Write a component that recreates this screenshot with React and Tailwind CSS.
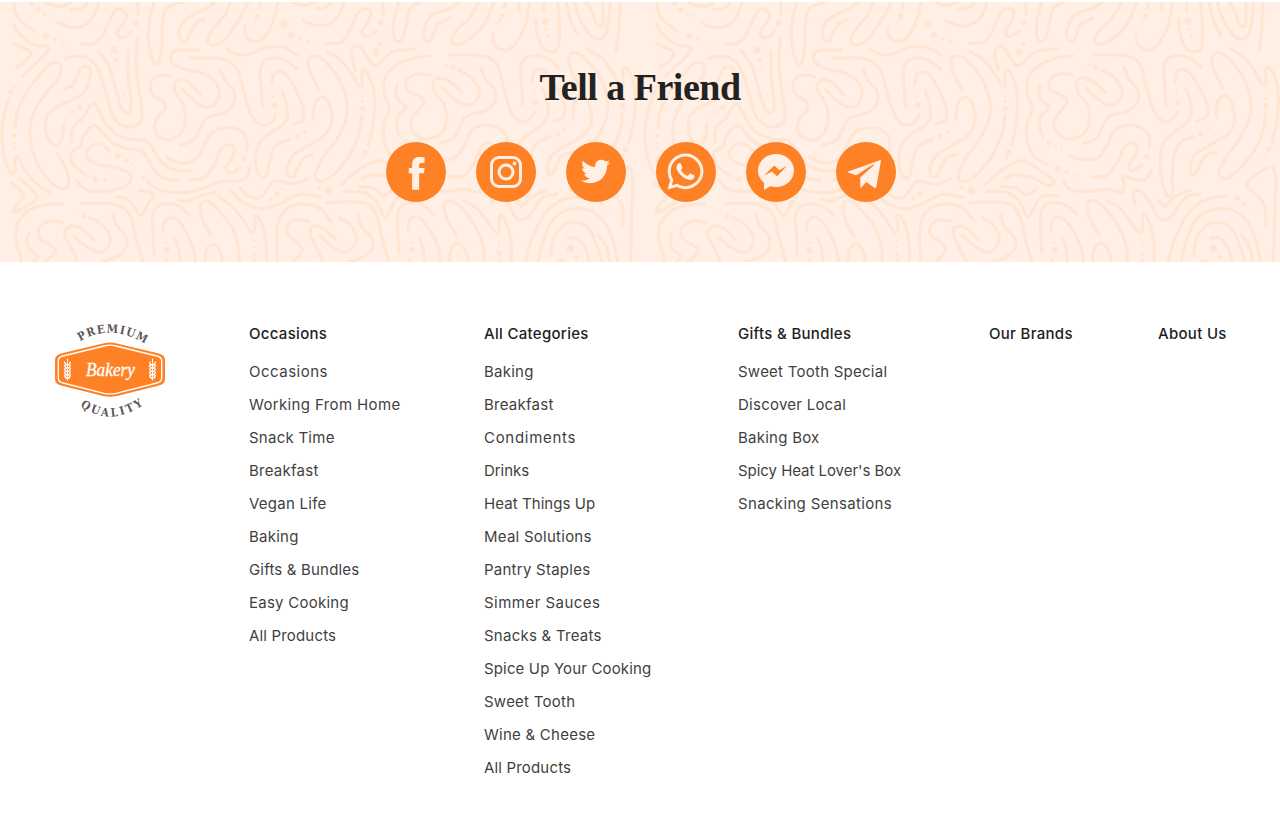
import React from "react";
import { FaTwitter, FaWhatsapp } from "react-icons/fa";

/* Hand-drawn doodle lines of the banner, as points on a 1929-wide repeating tile. */
const LINES_LEFT = `
42,6 45,35 65,65 104,94
40,72 60,105 100,133 140,140 143,152 115,185 67,227
42,130 88,153 92,165 75,185 50,200
135,6 160,16 190,18 210,8
213,29 235,27 255,18 262,6
174,67 200,79 235,82 265,68 285,40 297,6
246,131 280,131 305,110 325,70 345,33 365,28 380,45 370,70 352,95 360,112 380,108 395,94
413,6 415,44
413,112 408,180 415,260 426,330 422,365 395,380 360,372 335,340 315,270 290,200 260,173 225,168 196,175
295,153 325,195 345,260 362,320 378,338 392,330 392,290 384,230 384,153
193,267 215,258 232,225 245,202 262,200 272,212 265,250 250,280 215,300 165,325 140,350 137,390 150,425 168,437 182,425 190,400 190,372
216,427 215,400 225,375 250,355 262,330 275,312 285,312 298,335 320,375 350,403 395,418 430,420 455,440 475,475 500,500 535,512 575,512
262,528 225,500 212,475 215,455 238,440 250,410 270,383 290,378 308,400 340,430 380,445 425,453 445,480 465,515 495,535 533,541
327,452 305,432 285,433 262,450 262,475 290,492 345,503 385,517 394,535 380,555 340,570 290,575 250,565 231,541
45,383 52,335 80,275 115,230 145,195 170,187 184,200 178,230 150,265 115,310 95,355 90,405 98,455 120,505 150,545 180,565 203,558 205,530 195,500 174,462
27,295 12,345 6,405 12,465 27,510 40,522 45,505 45,475 55,472 75,510 105,548 150,577
60,537 85,558 111,590 90,612 55,632 40,635 50,615 70,590 60,570 33,550
185,611 130,616 85,632 55,665 47,700 50,735 62,765 62,786
187,669 155,662 125,675 114,695 122,720 150,735 167,750 155,768 135,786
86,702 80,722 90,750 113,768 100,786
246,610 320,610 365,620 390,645 405,700 420,760 430,786
338,645 350,675 375,705 380,735 360,765 305,786
270,653 300,670 328,705 325,740 300,757 275,748 250,733 224,710
280,720 250,690 220,678 197,690 197,715 215,745 232,786
418,572 455,578 460,590 445,610 428,643 415,640 395,610 375,595 352,591
442,546 480,570 540,578 600,568 665,545 715,543 740,530 750,503
535,598 565,603 595,590 643,578
570,645 535,618 500,611 470,622 457,650 460,700 462,760
490,690 493,668 508,652 530,658 558,695 580,750 587,786
522,711 535,745 540,786
633,706 610,665 600,625 607,606 630,606 665,640 700,690 715,745 718,786
616,786 618,755 632,735 650,738 663,760 666,786
656,591 695,618 730,660 750,692 762,695 765,670 762,650 772,648 790,685 798,735 800,786
547,6 500,25 487,70 485,140 478,185 467,192 455,175 445,110 450,50 463,6
645,6 620,25 580,45 550,65 537,100 545,122 560,122 572,95 590,68 614,58
690,6 675,45 640,85 623,120 635,135 670,122 710,70 745,6
735,80 737,105 755,123 785,118 815,75 835,6
780,6 777,24
680,147 710,162 750,162 800,142 850,142 893,165
594,150 540,150 515,158 515,185 550,207 600,217 640,240 658,275 645,312 620,322 590,308 547,270
600,283 570,250 545,238 525,250 525,275 545,305 556,345 548,390 520,417 490,417 465,395 468,360 495,325 490,305 460,285 450,260 460,235 490,225 514,230
570,174 650,174 690,187 715,215 730,270 750,335 775,370 800,374 820,360 827,343
661,208 675,240 700,270 703,305 680,335 620,355 605,375 580,420 540,436
500,472 545,490 590,475 615,430 640,395 690,383 725,395 740,420 740,449
570,538 610,535 640,500 665,445 690,435 705,450 695,475 678,500 685,518 700,518 718,503
893,208 860,182 825,174 795,182 781,210 783,260 789,323
815,252 820,225 838,215 860,225 890,275 910,325 908,360 879,371
847,272 858,310 862,355 840,380 795,410 772,445 768,500 785,533 800,525 810,480 825,440 870,417
938,465 910,475 893,505 880,530 863,525 862,500 880,465 920,440 970,410 993,375 995,335 980,298 962,293 945,310 938,358
957,269 930,215 925,180 940,167 970,180 1015,235 1040,300 1040,350 1015,410 975,465 950,510 948,538 970,543 1010,515 1055,455 1080,390 1086,347
982,155 1020,178 1050,215 1075,255 1087,258 1085,230 1090,210 1100,215 1120,265 1124,320 1118,380 1105,435
980,130 1020,128 1045,100 1070,45 1095,25 1113,38 1105,65 1087,95 1100,110 1130,93
909,63 960,78 1000,65 1020,40 1032,6
949,27 975,23 997,6
875,6 910,16 945,6
1148,6 1150,42
1066,210 1054,160 1069,138 1086,145 1106,180 1123,197 1146,183 1181,155 1243,147
720,564 750,590 780,592 805,565 825,543 880,552 922,536
692,572 730,608 785,627 840,610 900,583 960,592
1031,575 1091,577 1129,605 1146,640 1158,652 1173,625 1196,590 1246,587
981,608 1056,605 1106,615 1131,650 1143,700 1156,750 1168,786
833,786 830,700 840,650 870,620 910,612 960,625 993,664
924,663 885,660 862,680 865,705 900,735 905,755 880,786
1007,718 970,685 945,678 930,695 945,735 970,786
958,707 990,735 1030,757 1060,740 1068,710 1050,675 1018,653
1072,645 1085,680 1115,715 1115,750 1080,775 1045,786
1024,555 1076,510 1136,482 1181,505 1226,535 1231,553 1211,555 1161,530 1111,525 1086,537
1078,560 1121,565 1151,585 1181,567`;

const LINES_RIGHT = `
550,6 520,25 508,70 495,118 475,120 470,70 485,6
667,6 640,25 585,45 562,85 560,110 572,124 588,108 600,75 638,55
725,6 700,50 660,90 645,115 655,133 690,122 740,75 770,6
768,102 770,125 785,145 810,150 840,125 865,75 877,6
808,6 800,25
845,6 846,30
895,57 900,100 915,140 940,155 960,148 968,110 965,50 962,6
921,6 920,30
988,6 1000,60 1023,107
1012,6 1030,60 1060,105 1085,117 1105,105 1115,60 1120,6
1047,6 1065,35 1077,70 1088,80 1097,70 1098,6
1149,6 1145,90 1137,152
578,167 520,177 465,205 442,240 443,285 457,325 440,375 443,430 465,470 500,493
481,255 476,285 490,305 507,322 482,350 480,385 490,411
578,224 540,222 510,240 512,270 550,290 562,305 545,330 525,355 525,390 550,413 580,415 612,400 628,365 622,315 598,285 588,255 600,235 625,238 650,253 674,277
618,265 650,295 690,315 720,300 725,265 700,230 667,210
732,202 745,235 773,270 773,305 745,332 690,348 670,375 650,415 612,429
639,165 720,165 765,177 785,205 800,265 820,330 845,362 870,363 894,338
570,466 600,478 650,475 680,440 705,390 745,375 785,385 808,410 808,441
640,530 680,527 710,490 735,440 755,428 772,440 765,465 747,495 755,512 785,495
550,543 570,568 610,575 680,568 725,577 732,555 728,530 745,532 780,542 800,535 815,511
765,612 760,585 770,572 790,580 815,615 835,650 855,660 880,645 905,605 925,588 960,582
838,602 855,618 885,590 930,570
965,202 930,175 890,167 858,182 852,215 857,315
885,245 892,215 908,207 930,220 960,265 982,315 980,350 948,363
917,266 930,300 932,350 900,385 860,415 843,450 842,520 855,575 868,592 878,575 877,520 885,455 905,425 940,409
1008,457 975,468 955,505 940,525 930,505 945,465 990,435 1040,405 1062,370 1060,325 1045,292 1028,288 1012,310 1009,353
1027,262 1000,205 996,175 1010,158 1040,172 1085,225 1110,290 1110,345 1085,405 1040,470 1018,510 1022,532 1045,533 1085,500 1130,440 1152,380 1156,340
1053,148 1095,175 1125,215 1145,250 1158,252 1157,215 1162,202 1175,212 1192,255 1195,310 1190,370 1175,428
1157,673 1155,620 1130,585 1100,560 1115,535 1150,510 1178,503 1187,540 1185,620 1180,786
865,786 885,715 925,640 975,600 1040,588
903,786 920,720 950,655 1000,628 1060,632 1105,670 1130,730 1142,786
940,767 950,715 980,675 1015,667 1055,685 1080,740 1095,786
993,714 1020,715 1045,745 1057,786
1085,705 1110,745 1117,786
592,643 555,615 515,608 488,625 481,665 486,756
513,690 517,662 532,650 555,660 585,700 605,750 611,786
546,711 558,745 563,786
657,704 630,655 622,615 635,602 665,615 710,670 737,730 743,786
638,786 640,755 655,732 675,735 690,765 694,786
679,601 720,625 755,670 775,695 787,690 787,650 795,645 812,680 822,730 822,786`;

const DOTS_LEFT = `95,10,7 113,29,8 135,41,6 152,47,4 138,107,10 165,118,6 188,126,4 207,132,1 407,70,9
343,150,11 350,181,7 354,207,4 371,285,4 239,322,8 216,336,6 200,354,3 353,467,9 380,481,6 397,492,4
287,538,9 315,538,6 336,533,3 33,277,8 42,262,4 51,249,3 42,406,7 43,427,5 44,443,4 252,646,8 234,641,4 223,638,2
429,535,6 493,711,2 497,727,4 500,751,10 500,780,6 762,725,4 762,742,5 763,763,6 763,780,6 772,48,8 768,60,4
763,70,3 755,76,2 732,476,8 817,274,2 820,290,4 824,315,9 892,410,8 914,396,5 929,378,3 1086,288,4 1087,305,5
1087,326,8 1097,455,8 1091,468,5 1088,477,4 1080,484,3 854,73,12 873,105,10 900,116,6 923,125,4 940,130,1
1142,68,9 1128,156,12 1141,131,7 1161,124,3 830,581,8 848,567,4 812,597,5 936,554,3 956,562,6 985,572,12`;

const DOTS_RIGHT = `796,46,8 789,60,5 785,67,4 779,74,2 925,64,10 928,87,6 935,107,5 508,427,8 528,438,5 544,445,4
647,202,8 629,197,4 618,194,2 801,470,8 533,507,10 560,518,6 583,525,4 598,532,1 889,267,3 891,283,4 894,307,9
962,402,8 984,388,5 1000,370,3 1156,281,3 1157,297,5 1157,318,8 1166,448,8 1159,463,4 1151,475,3 1071,594,9
1093,611,7 1112,630,4 1000,746,12 1019,772,7 972,790,14 517,711,3 520,727,4 524,749,9 518,779,6 785,723,3
786,740,4 787,760,7 786,782,5`;

/* Smooth curve through a row of points. */
function curve(row) {
  const p = row.trim().split(" ").map((s) => s.split(",").map(Number));
  let d = `M${p[0]}`;
  for (let i = 0; i < p.length - 1; i++) {
    const a = p[i - 1] || p[i];
    const b = p[i];
    const c = p[i + 1];
    const e = p[i + 2] || c;
    d += `C${b[0] + (c[0] - a[0]) / 6},${b[1] + (c[1] - a[1]) / 6} ${c[0] - (e[0] - b[0]) / 6},${c[1] - (e[1] - b[1]) / 6} ${c[0]},${c[1]}`;
  }
  return d;
}

function Doodles({ lines, dots, shift }) {
  return (
    <g transform={`translate(${shift} 0)`}>
      <path d={lines.trim().split("\n").map(curve).join("")} fill="none" stroke="#ffe6d4" strokeWidth="10" strokeLinecap="round" strokeLinejoin="round" />
      {dots.split(/\s+/).map((s) => {
        const [x, y, r] = s.split(",");
        return <circle key={s} cx={x} cy={y} r={r} fill="#ffe6d4" />;
      })}
    </g>
  );
}

function BannerPattern() {
  return (
    <svg className="absolute inset-0 h-full w-full" viewBox="0 2 1280 260" aria-hidden="true">
      <defs>
        <g id="doodle-tile">
          <Doodles lines={LINES_LEFT} dots={DOTS_LEFT} shift={0} />
          <Doodles lines={LINES_RIGHT} dots={DOTS_RIGHT} shift={711} />
        </g>
      </defs>
      <use href="#doodle-tile" transform="scale(.33333)" />
      <use href="#doodle-tile" transform="translate(643 0) scale(.33333)" />
    </svg>
  );
}

function Glyph({ children }) {
  return (
    <svg className="h-[60px] w-[60px]" viewBox="0 0 60 60" fill="#ffefe4">
      {children}
    </svg>
  );
}

const SOCIAL = [
  { name: "Facebook", icon: <Glyph><path d="M38.600 15.200V21h-3.400c-1.600 0-2.100.7-2.100 2.200V26h5.500l-.7 5.300h-4.800V47.700h-7V31.300H22.800V26h3.300v-3.600c0-4.700 2.700-7.300 7.200-7.300z" /></Glyph> },
  { name: "Instagram", icon: <Glyph><rect x="15.500" y="15.500" width="29" height="29" rx="7.500" fill="none" stroke="#ffefe4" strokeWidth="3" /><circle cx="30" cy="30" r="7" fill="none" stroke="#ffefe4" strokeWidth="3" /><circle cx="38.500" cy="21.500" r="1.900" /></Glyph> },
  { name: "Twitter", icon: <FaTwitter className="mb-[1px] mr-[1px] size-[29px]" /> },
  { name: "WhatsApp", icon: <FaWhatsapp className="mb-[2px] mr-px size-[41px]" /> },
  { name: "Messenger", icon: <Glyph><path fillRule="evenodd" d="M30 12C20 12 12 19.500 12 28.500c0 4.800 2.300 9.200 6 12.200V48l6-3.700c1.900.5 3.900.8 6 .8 10 0 18-7.400 18-16.600S40 12 30 12zM28.300 23.500l5 4.800 7.700-4.500L31 34.200l-5-4.600-8 4z" /></Glyph> },
  { name: "Telegram", icon: <Glyph><path d="M44.500 18 12.300 29.500c-.5.300-.4.700.1 1l7.700 2.800 16.500-10.500c1.200-.8 1.900-.1 1 .8L24.200 35.400V45c0 .7.600.9 1 .4l5.200-5.300 8.200 5.900c.8.500 1.400.2 1.600-.7L45 18.600c.1-.5-.1-.7-.5-.6z" /></Glyph> },
];

const COLUMNS = [
  { title: "Occasions", width: "w-[235px]", items: ["Occasions", "Working From Home", "Snack Time", "Breakfast", "Vegan Life", "Baking", "Gifts & Bundles", "Easy Cooking", "All Products"] },
  { title: "All Categories", width: "w-[254px]", items: ["Baking", "Breakfast", "Condiments", "Drinks", "Heat Things Up", "Meal Solutions", "Pantry Staples", "Simmer Sauces", "Snacks & Treats", "Spice Up Your Cooking", "Sweet Tooth", "Wine & Cheese", "All Products"] },
  { title: "Gifts & Bundles", width: "w-[251px]", items: ["Sweet Tooth Special", "Discover Local", "Baking Box", "Spicy Heat Lover's Box", "Snacking Sensations"] },
  { title: "Our Brands", width: "w-[169px]", items: [] },
  { title: "About Us", width: "w-[80px]", items: [] },
];

/* Letter spacing of the labels that differ from the default. */
const TRACKING = {
  "Occasions": "tracking-[0.5px]",
  "Working From Home": "tracking-[0.37px]",
  "Condiments": "tracking-[0.7px]",
  "Drinks": "tracking-[-0.05px]",
  "Heat Things Up": "tracking-[0.07px]",
  "Simmer Sauces": "tracking-[0.47px]",
  "Spice Up Your Cooking": "tracking-[0.15px]",
  "Spicy Heat Lover's Box": "tracking-[-0.04px]",
  "Snacking Sensations": "tracking-[0.34px]",
  "Gifts & Bundles": "tracking-[0.18px]",
  "All Products": "tracking-[0.17px]",
};

function Wheat({ x }) {
  return (
    <g transform={`translate(${x} 37)`} stroke="#fff" strokeWidth="1.500" strokeLinecap="round" fill="none">
      <path d="M0 0V3M0 4V21" strokeWidth="1" />
      {[4, 7.3, 10.6, 13.9, 17.2].map((y) => (
        <path key={y} d={`M-2.7 ${y - 0.8}Q-2.5 ${y + 1.5} -.6 ${y + 2}M2.7 ${y - 0.8}Q2.5 ${y + 1.5} .6 ${y + 2}`} />
      ))}
    </g>
  );
}

function Logo() {
  return (
    <svg className="h-[95px] w-[110px] shrink-0 overflow-visible" viewBox="0 0 110 95">
      <defs>
        <path id="arc-top" d="M25 19.500Q55 1 89 21" />
        <path id="arc-bottom" d="M25 84Q55 105.500 88 83" />
      </defs>
      <path d="M55 20.500Q58 20.500 62 21.500L104 31.500Q110 33 110 38V57Q110 62 104 63.500L62 74Q55 75.500 48 74L6 63.500Q0 62 0 57V38Q0 33 6 31.500L48 21.500Q52 20.500 55 20.500Z" fill="#ff8126" />
      <path d="M55 23.200Q58 23.200 61 24L102 34Q106.700 35 106.700 39V56Q106.700 60 102 61L61 71.300Q55 72.500 49 71.300L8 61Q3.300 60 3.300 56V39Q3.300 35 8 34L49 24Q52 23.200 55 23.200Z" fill="none" stroke="#fff" strokeWidth="1.300" />
      <Wheat x={12.5} />
      <Wheat x={97.5} />
      <text x="31" y="54" textLength="49" lengthAdjust="spacingAndGlyphs" fill="#fff" stroke="#fff" strokeWidth=".3" className="font-['Liberation_Serif',serif] text-[18px] italic">Bakery</text>
      <text fill="#5f5555" className="font-['DejaVu_Serif_Condensed','DejaVu_Serif',serif] text-[11.5px] font-bold">
        <textPath href="#arc-top" textLength="69" lengthAdjust="spacing">PREMIUM</textPath>
      </text>
      <text fill="#5f5555" className="font-['DejaVu_Serif_Condensed','DejaVu_Serif',serif] text-[11.500px] font-bold">
        <textPath href="#arc-bottom" textLength="68" lengthAdjust="spacing">QUALITY</textPath>
      </text>
    </svg>
  );
}

export default function App() {
  return (
    <div className="h-[838px] overflow-hidden bg-white pt-[2px] font-['Inter',sans-serif]">
      <section className="relative h-[260px] bg-[#ffefe4]">
        <BannerPattern />
        <div className="relative flex flex-col items-center pt-[60px]">
          <h2 className="h-[50px] whitespace-nowrap font-['Liberation_Serif',serif] text-[38px] font-bold leading-[50px] tracking-[-0.5px] text-[#222]">Tell a Friend</h2>
          <div className="ml-[2px] mt-[30px] flex gap-[30px]">
            {SOCIAL.map((s) => (
              <a key={s.name} aria-label={s.name} className="flex size-[60px] items-center justify-center rounded-full bg-[#ff8126] text-[#ffefe4]">
                {s.icon}
              </a>
            ))}
          </div>
        </div>
      </section>
      <footer className="flex pl-[55px] pt-[60px]">
        <Logo />
        <nav className="ml-[84px] flex text-[15px] text-[#3f3f3f]">
          {COLUMNS.map((c) => (
            <div key={c.title} className={`${c.width} shrink-0 whitespace-nowrap`}>
              <h3 className="mb-[9px] h-6 font-medium leading-6 tracking-[0.3px] text-[#222]">{c.title}</h3>
              <ul>
                {c.items.map((item) => (
                  <li key={item} className={`h-[33px] leading-[33px] ${TRACKING[item] || "tracking-[0.25px]"}`}>{item}</li>
                ))}
              </ul>
            </div>
          ))}
        </nav>
      </footer>
    </div>
  );
}
